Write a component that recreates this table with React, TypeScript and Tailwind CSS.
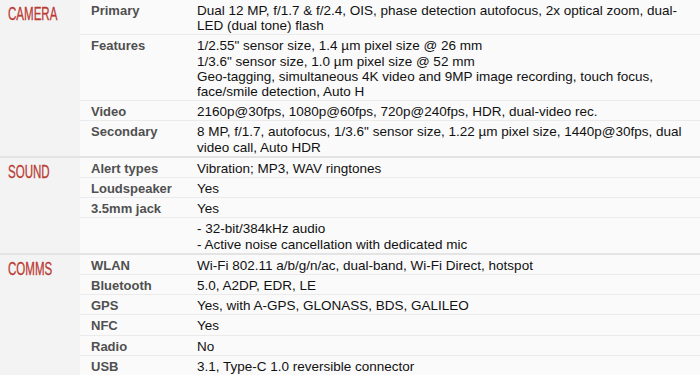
import React from 'react';

type Row = { label: string; lines: string[] };
type Section = { title: string; rows: Row[] };

const SPECS: Section[] = [
  {
    title: 'CAMERA',
    rows: [
      {
        label: 'Primary',
        lines: ['Dual 12 MP, f/1.7 & f/2.4, OIS, phase detection autofocus, 2x optical zoom, dual-LED (dual tone) flash'],
      },
      {
        label: 'Features',
        lines: [
          '1/2.55" sensor size, 1.4 µm pixel size @ 26 mm',
          '1/3.6" sensor size, 1.0 µm pixel size @ 52 mm',
          'Geo-tagging, simultaneous 4K video and 9MP image recording, touch focus, face/smile detection, Auto H',
        ],
      },
      { label: 'Video', lines: ['2160p@30fps, 1080p@60fps, 720p@240fps, HDR, dual-video rec.'] },
      {
        label: 'Secondary',
        lines: ['8 MP, f/1.7, autofocus, 1/3.6" sensor size, 1.22 µm pixel size, 1440p@30fps, dual video call, Auto HDR'],
      },
    ],
  },
  {
    title: 'SOUND',
    rows: [
      { label: 'Alert types', lines: ['Vibration; MP3, WAV ringtones'] },
      { label: 'Loudspeaker', lines: ['Yes'] },
      { label: '3.5mm jack', lines: ['Yes'] },
      { label: '', lines: ['- 32-bit/384kHz audio', '- Active noise cancellation with dedicated mic'] },
    ],
  },
  {
    title: 'COMMS',
    rows: [
      { label: 'WLAN', lines: ['Wi-Fi 802.11 a/b/g/n/ac, dual-band, Wi-Fi Direct, hotspot'] },
      { label: 'Bluetooth', lines: ['5.0, A2DP, EDR, LE'] },
      { label: 'GPS', lines: ['Yes, with A-GPS, GLONASS, BDS, GALILEO'] },
      { label: 'NFC', lines: ['Yes'] },
      { label: 'Radio', lines: ['No'] },
      { label: 'USB', lines: ['3.1, Type-C 1.0 reversible connector'] },
    ],
  },
];

function SpecRow({ row }: { row: Row }) {
  return (
    <div className="flex border-b border-[#ebebeb] last:border-b-0 pt-[3px] pb-[1px] leading-[15.2px]">
      <div className="w-[110px] shrink-0 pl-[11px] text-[13px] font-bold text-[#505050]">{row.label}</div>
      <div className="flex-1 min-w-0 pl-[7px] pr-[10px] text-[13.5px] text-[#111]">
        {row.lines.map((l, i) => (
          <div key={i}>{l}</div>
        ))}
      </div>
    </div>
  );
}

export default function App() {
  return (
    <div
      className="w-[700px] h-[375px] overflow-hidden bg-[#fafafa]"
      style={{ fontFamily: '"Liberation Sans", Arial, sans-serif' }}
    >
      {SPECS.map((s) => (
        <div key={s.title} className="flex border-b-2 border-[#e4e4e4]">
          <div className="w-[80px] shrink-0 bg-[#f3f3f3] pl-[8px] pt-[3px]">
            <span className="inline-block origin-left scale-x-[0.66] text-[17.5px] leading-[18px] text-[#bb3a33] [-webkit-text-stroke:0.3px_#bb3a33]">
              {s.title}
            </span>
          </div>
          <div className="flex-1 min-w-0">
            {s.rows.map((r, i) => (
              <SpecRow key={i} row={r} />
            ))}
          </div>
        </div>
      ))}
    </div>
  );
}
